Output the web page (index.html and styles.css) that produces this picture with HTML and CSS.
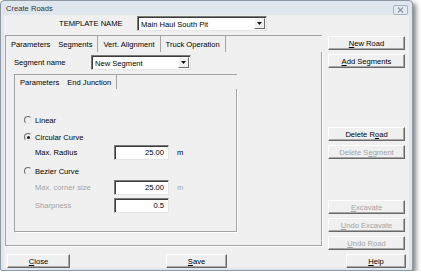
FILE: index.html
```html
<!DOCTYPE html>
<html lang="en">
<head>
    <meta charset="utf-8">
    <title>Create Roads</title>
    <link rel="stylesheet" href="styles.css">
</head>
<body>
    <div class="window">
        <div class="titlebar">
            <span class="title">Create Roads</span>
            <span class="close-x">
                <svg width="7" height="6" viewBox="0 0 7 6"><path d="M1 0.5 L6 5.5 M6 0.5 L1 5.5" stroke="#8a96a4" stroke-width="1.1"/></svg>
            </span>
        </div>

        <div class="client">
            <!-- template selector -->
            <div class="template-row">
                <span class="template-label">TEMPLATE NAME</span>
                <div class="combo combo-template">
                    <span class="combo-text">Main Haul South Pit</span>
                    <span class="combo-arrow"><svg width="5" height="3" viewBox="0 0 5 3"><path d="M0 0 H5 L2.5 3 Z" fill="#111"/></svg></span>
                </div>
            </div>

            <div class="main">
                <div class="tabs tabs-outer">
                    <div class="tab-strip">
                        <span class="tab">Parameters</span>
                        <span class="tab active">Segments</span>
                        <span class="tab">Vert. Alignment</span>
                        <span class="tab">Truck Operation</span>
                    </div>
                    <div class="tab-panel">
                        <div class="segment-row">
                            <span class="segment-label">Segment name</span>
                            <div class="combo combo-segment">
                                <span class="combo-text">New Segment</span>
                                <span class="combo-arrow"><svg width="5" height="3" viewBox="0 0 5 3"><path d="M0 0 H5 L2.5 3 Z" fill="#111"/></svg></span>
                            </div>
                        </div>

                        <div class="tabs tabs-inner">
                            <div class="tab-strip">
                                <span class="tab">Parameters</span>
                                <span class="tab active">End Junction</span>
                            </div>
                            <div class="tab-panel junction">
                                <div class="row row-linear">
                                    <span class="radio"></span><span class="radio-label">Linear</span>
                                </div>
                                <div class="row row-circular">
                                    <span class="radio checked"></span><span class="radio-label">Circular Curve</span>
                                </div>
                                <div class="row field-row row-radius">
                                    <span class="field-label">Max. Radius</span>
                                    <span class="input">25.00</span>
                                    <span class="unit">m</span>
                                </div>
                                <div class="row row-bezier">
                                    <span class="radio"></span><span class="radio-label">Bezier Curve</span>
                                </div>
                                <div class="row field-row disabled row-corner">
                                    <span class="field-label">Max. corner size</span>
                                    <span class="input">25.00</span>
                                    <span class="unit">m</span>
                                </div>
                                <div class="row field-row disabled row-sharp">
                                    <span class="field-label">Sharpness</span>
                                    <span class="input">0.5</span>
                                </div>
                            </div>
                        </div>
                    </div>
                </div>

                <div class="side">
                    <div class="btn"><u>N</u>ew Road</div>
                    <div class="btn"><u>A</u>dd Segments</div>
                    <div class="btn btn-delete">Delete R<u>o</u>ad</div>
                    <div class="btn disabled">Delete S<u>e</u>gment</div>
                    <div class="btn disabled btn-excavate"><u>E</u>xcavate</div>
                    <div class="btn disabled"><u>U</u>ndo Excavate</div>
                    <div class="btn disabled"><u>U</u>ndo Road</div>
                </div>
            </div>

            <div class="bottom">
                <div class="btn btn-close"><u>C</u>lose</div>
                <div class="btn btn-save"><u>S</u>ave</div>
                <div class="btn btn-help"><u>H</u>elp</div>
            </div>
        </div>
    </div>
</body>
</html>
```

FILE: styles.css
```css
* {
    box-sizing: border-box;
}

body {
    margin: 0;
    background: #ffffff;
    font-family: "Liberation Sans", Arial, sans-serif;
    font-size: 7.6px;
    color: #000000;
}

/* window frame */
.window {
    width: 413px;
    height: 271px;
    display: flex;
    flex-direction: column;
    padding: 0 3px 2px 3px;
    background: #dfe6ee;
    border: 1px solid #8e99a6;
    border-radius: 4px 4px 2px 2px;
    box-shadow: 3px 3px 5px rgba(0,0,0,0.5);
}

.titlebar {
    height: 14px;
    display: flex;
    align-items: flex-start;
    justify-content: space-between;
}

.title {
    padding: 3px 0 0 2px;
    color: #333333;
}

.close-x {
    width: 15px;
    height: 10px;
    margin: 4px 1px 0 0;
    display: flex;
    align-items: center;
    justify-content: center;
    background: #e4eaf1;
    border: 1px solid #a6b2c0;
    border-radius: 2px;
}

.client {
    flex: 1;
    display: flex;
    flex-direction: column;
    background: #f0f0f0;
}

/* combo boxes and fields */
.combo {
    height: 15px;
    display: flex;
    align-items: center;
    background: #ffffff;
    border: 1px solid;
    border-color: #7a7a7a #e4e4e4 #e4e4e4 #7a7a7a;
    box-shadow: inset 1px 1px 0 #3c3c3c;
}

.combo-text {
    flex: 1;
    padding-left: 3px;
    padding-top: 1px;
}

.combo-arrow {
    width: 11px;
    height: 11px;
    margin-right: 1px;
    display: flex;
    align-items: center;
    justify-content: center;
    background: #f0f0f0;
    border: 1px solid;
    border-color: #ffffff #6a6a6a #6a6a6a #ffffff;
}

.template-row {
    height: 15px;
    margin-top: 1px;
    padding-left: 55px;
    display: flex;
    align-items: center;
}

.template-label {
    width: 78px;
}

.combo-template {
    width: 130px;
}

.main {
    height: 215px;
    margin-top: 4px;
    display: flex;
}

/* tab controls */
.tabs {
    display: flex;
    flex-direction: column;
    border-top: 1px solid #a3a3a3;
    border-left: 1px solid #a3a3a3;
}

.tab-strip {
    display: flex;
    align-items: stretch;
}

.tab {
    display: flex;
    align-items: center;
    padding: 0 5px;
    border-right: 1px solid #a3a3a3;
}

.tab:first-child {
    border-right: none;
    padding-right: 3px;
}

.tab-panel {
    flex: 1;
    border-right: 1px solid #a3a3a3;
    border-bottom: 1px solid #a3a3a3;
    box-shadow: 1px 1px 0 #ffffff;
}

.tabs-outer {
    width: 317px;
    height: 211px;
    margin-left: 1px;
}

.tabs-outer > .tab-strip {
    height: 16px;
}

.segment-row {
    height: 15px;
    margin-top: 3px;
    padding-left: 8px;
    display: flex;
    align-items: center;
}

.segment-label {
    width: 77px;
}

.combo-segment {
    width: 100px;
}

.tabs-inner {
    width: 223px;
    height: 158px;
    margin: 4px 0 0 8px;
}

.tabs-inner > .tab-strip {
    height: 14px;
}

.junction {
    padding: 23px 0 0 9px;
}

/* option rows */
.row {
    display: flex;
    align-items: center;
    height: 16px;
}

.row-circular {
    margin-top: 1px;
}

.row-bezier {
    margin-top: 3px;
}

.row-corner {
    margin-top: 1px;
}

.row-sharp {
    margin-top: 3px;
}

.field-row {
    height: 15px;
    padding-left: 11px;
}

.radio {
    width: 8px;
    height: 8px;
    border-radius: 50%;
    border: 1px solid;
    border-color: #6e6e6e #e8e8e8 #e8e8e8 #6e6e6e;
    display: flex;
    align-items: center;
    justify-content: center;
}

.radio.checked::after {
    content: "";
    width: 3px;
    height: 3px;
    border-radius: 50%;
    background: #1c1c1c;
}

.radio-label {
    margin-left: 3px;
}

.field-label {
    width: 79px;
}

.input {
    width: 55px;
    height: 15px;
    padding: 2px 4px 0 0;
    text-align: right;
    background: #ffffff;
    border: 1px solid;
    border-color: #7a7a7a #e4e4e4 #e4e4e4 #7a7a7a;
    box-shadow: inset 1px 1px 0 #3c3c3c;
}

.unit {
    margin-left: 8px;
}

.disabled .field-label,
.disabled .unit {
    color: #a3a3a3;
}

/* buttons */
.btn {
    height: 14px;
    display: flex;
    align-items: center;
    justify-content: center;
    background: #f0f0f0;
    border: 1px solid;
    border-color: #ffffff #696969 #696969 #ffffff;
    box-shadow: inset -1px -1px 0 #a8a8a8;
}

.btn.disabled {
    color: #a3a3a3;
}

.side {
    width: 77px;
    margin-left: 6px;
    padding-top: 1px;
    display: flex;
    flex-direction: column;
}

.side .btn + .btn {
    margin-top: 4px;
}

.side .btn-delete {
    margin-top: 59px !important;
}

.side .btn-excavate {
    margin-top: 41px !important;
}

.bottom {
    height: 14px;
    margin-top: 4px;
    display: flex;
}

.btn-close {
    width: 63px;
    margin-left: 3px;
}

.btn-save {
    width: 61px;
    margin-left: 96px;
}

.btn-help {
    width: 60px;
    margin-left: auto;
    margin-right: 3px;
}
```
